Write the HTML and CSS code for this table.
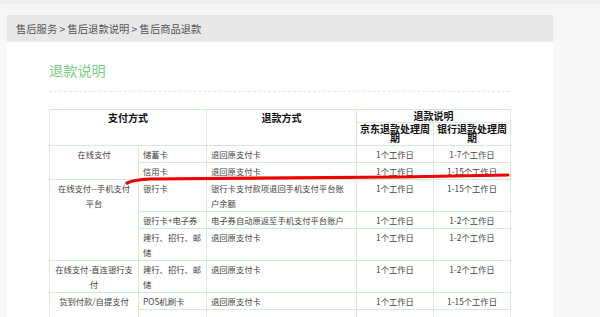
FILE: index.html
```html
<!DOCTYPE html>
<html lang="zh-CN">
<head>
<meta charset="utf-8">
<title>售后商品退款</title>
<link rel="stylesheet" href="styles.css">
</head>
<body>
<div class="page">
  <div class="crumbs">售后服务 &gt; 售后退款说明 &gt; 售后商品退款</div>
  <div class="content">
    <h2 class="title">退款说明</h2>
    <div class="rule"></div>
    <div class="table-wrap">
      <table class="refund">
        <colgroup>
          <col class="c1"><col class="c2"><col class="c3"><col class="c4"><col class="c5">
        </colgroup>
        <thead>
          <tr>
            <th colspan="2" rowspan="2" class="big">支付方式</th>
            <th rowspan="2" class="big">退款方式</th>
            <th colspan="2" class="sub">退款说明</th>
          </tr>
          <tr>
            <th class="sub wrap">京东退款处理周期</th>
            <th class="sub wrap">银行退款处理周期</th>
          </tr>
        </thead>
        <tbody>
          <tr>
            <td rowspan="2" class="ctr">在线支付</td>
            <td>储蓄卡</td>
            <td>退回原支付卡</td>
            <td class="ctr">1个工作日</td>
            <td class="ctr">1-7个工作日</td>
          </tr>
          <tr>
            <td>信用卡</td>
            <td>退回原支付卡</td>
            <td class="ctr">1个工作日</td>
            <td class="ctr">1-15个工作日</td>
          </tr>
          <tr>
            <td rowspan="3" class="ctr">在线支付--手机支付平台</td>
            <td>银行卡</td>
            <td>银行卡支付款项退回手机支付平台账户余额</td>
            <td class="ctr">1个工作日</td>
            <td class="ctr">1-15个工作日</td>
          </tr>
          <tr>
            <td>银行卡+电子券</td>
            <td>电子券自动原返至手机支付平台账户</td>
            <td class="ctr">1个工作日</td>
            <td class="ctr">1-2个工作日</td>
          </tr>
          <tr>
            <td>建行、招行、邮储</td>
            <td>退回原支付卡</td>
            <td class="ctr">1个工作日</td>
            <td class="ctr">1-2个工作日</td>
          </tr>
          <tr>
            <td class="ctr">在线支付-直连银行支付</td>
            <td>建行、招行、邮储</td>
            <td>退回原支付卡</td>
            <td class="ctr">1个工作日</td>
            <td class="ctr">1-2个工作日</td>
          </tr>
          <tr>
            <td rowspan="2" class="ctr">货到付款/自提支付</td>
            <td>POS机刷卡</td>
            <td>退回原支付卡</td>
            <td class="ctr">1个工作日</td>
            <td class="ctr">1-15个工作日</td>
          </tr>
          <tr class="tail">
            <td></td>
            <td></td>
            <td></td>
            <td></td>
          </tr>
        </tbody>
      </table>
      <svg class="mark" width="461" height="20" viewBox="0 0 461 20" aria-hidden="true">
        <path d="M78,17 Q86,13.5 101,13 L351,11 L459,9" fill="none" stroke="#f00000" stroke-width="3.2" stroke-linecap="round" stroke-linejoin="round"/>
      </svg>
    </div>
  </div>
</div>
</body>
</html>
```
FILE: styles.css
```css
html, body {
  margin: 0;
  padding: 0;
}
body {
  background: #f7f7f7;
  border-top: 4px solid #efefef;
  font-family: "Noto Sans CJK SC", "Noto Sans", sans-serif;
  overflow: hidden;
}
.page {
  margin: 11px 0 0 7px;
  width: 546px;
}
.crumbs {
  height: 27px;
  line-height: 28px;
  background: #e8e8e8;
  padding-left: 9px;
  font-size: 10.3px;
  color: #555;
}
.content {
  background: #fff;
  padding: 18px 43px 40px 42px;
  min-height: 300px;
}
.title {
  margin: 0;
  font-size: 14.2px;
  line-height: 20px;
  font-weight: normal;
  color: #79cf82;
}
.rule {
  margin-top: 11px;
  border-top: 1px dashed #e6e6e6;
}
.table-wrap {
  position: relative;
  margin-top: 17px;
  width: 461px;
}
.refund {
  width: 461px;
  table-layout: fixed;
  border-collapse: collapse;
  font-size: 8.3px;
  color: #444;
}
.c1 { width: 89px; }
.c2 { width: 68px; }
.c3 { width: 150px; }
.c4 { width: 77px; }
.c5 { width: 77px; }
.refund th,
.refund td {
  border: 1px solid #d3ead3;
  vertical-align: top;
}
.refund th {
  color: #111;
  font-weight: bold;
  font-size: 10px;
  text-align: center;
  padding: 0 3px;
}
.refund th.big {
  line-height: 14px;
  padding-top: 1px;
}
.refund th.sub {
  line-height: 10px;
  padding-top: 1px;
  padding-bottom: 1px;
}
.refund th.wrap {
  line-height: 8.5px;
  padding-top: 2px;
  padding-bottom: 3px;
  padding-left: 2px;
  padding-right: 2px;
}
.refund td {
  line-height: 15px;
  padding: 1px 4px 0 4px;
}
.refund td.ctr {
  text-align: center;
}
.refund .tail td {
  height: 15px;
}
.mark {
  position: absolute;
  left: 0;
  top: 57px;
  overflow: visible;
}
```
